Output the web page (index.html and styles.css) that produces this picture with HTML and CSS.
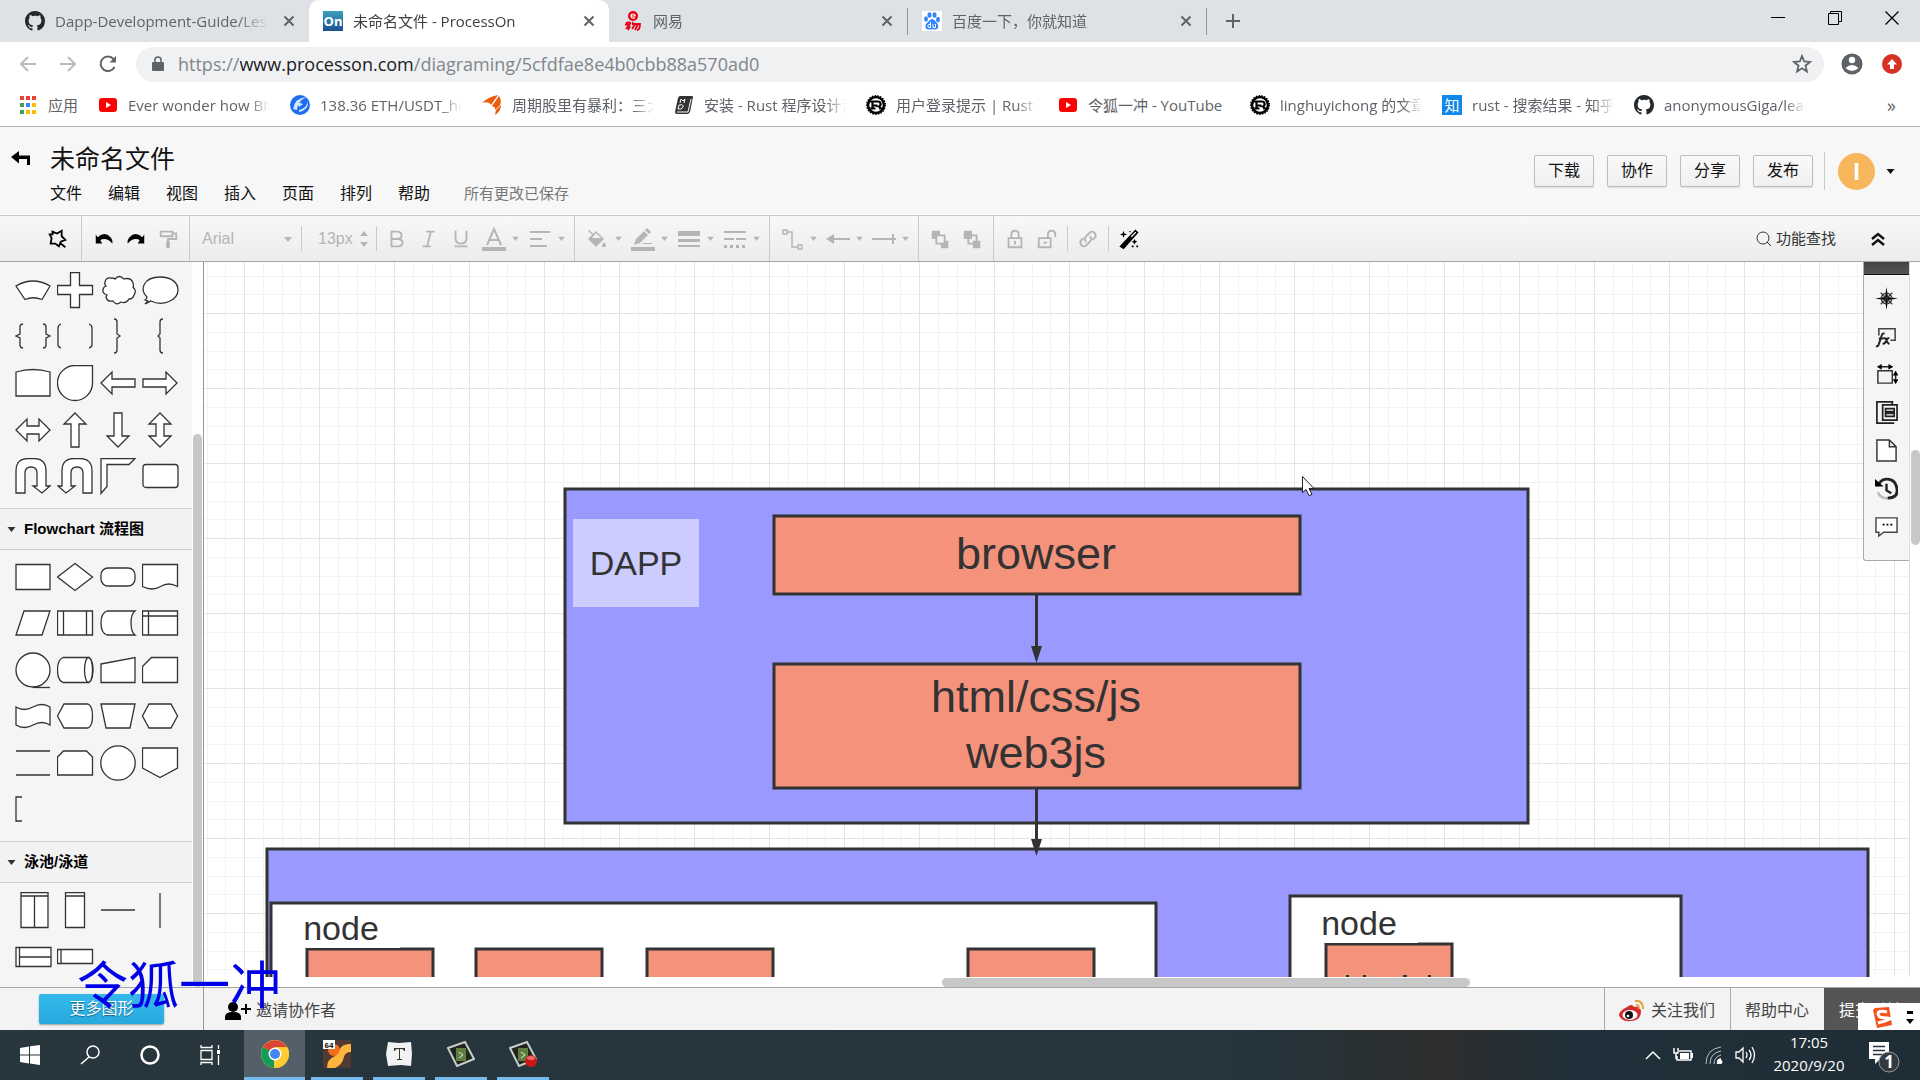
FILE: index.html
```html
<!DOCTYPE html>
<html lang="zh-CN">
<head>
<meta charset="utf-8">
<title>未命名文件 - ProcessOn</title>
<link rel="stylesheet" href="styles.css">
</head>
<body>
<svg class="defs" aria-hidden="true">
  <symbol id="github" viewBox="0 0 16 16"><path fill="#24292e" d="M8 0C3.58 0 0 3.58 0 8c0 3.54 2.29 6.53 5.47 7.59.4.07.55-.17.55-.38 0-.19-.01-.82-.01-1.49-2.01.37-2.53-.49-2.69-.94-.09-.23-.48-.94-.82-1.13-.28-.15-.68-.52-.01-.53.63-.01 1.08.58 1.23.82.72 1.21 1.87.87 2.33.66.07-.52.28-.87.51-1.07-1.78-.2-3.64-.89-3.64-3.95 0-.87.31-1.59.82-2.15-.08-.2-.36-1.02.08-2.12 0 0 .67-.21 2.2.82A7.6 7.6 0 0 1 8 3.87c.68 0 1.36.09 2 .27 1.53-1.04 2.2-.82 2.2-.82.44 1.1.16 1.92.08 2.12.51.56.82 1.27.82 2.15 0 3.07-1.87 3.75-3.65 3.95.29.25.54.73.54 1.48 0 1.07-.01 1.93-.01 2.2 0 .21.15.46.55.38A8.01 8.01 0 0 0 16 8c0-4.42-3.58-8-8-8z"/></symbol>
  <symbol id="youtube" viewBox="0 0 20 20"><rect x="1" y="3" width="18" height="14" rx="3" fill="#f00"/><path d="M8 7l5 3-5 3z" fill="#fff"/></symbol>
  <symbol id="rust" viewBox="0 0 20 20"><circle cx="10" cy="10" r="8" fill="none" stroke="#000" stroke-width="2.5"/><circle cx="10" cy="10" r="9.3" fill="none" stroke="#000" stroke-width="1.4" stroke-dasharray="1.5 1.3"/><path d="M3 6.5h9a2.6 2.6 0 0 1 1 5q1 .3 1.200 2h3M6.500 6.500v7M3 13.500h6.500M6.500 10.500h5" fill="none" stroke="#000" stroke-width="2.200"/></symbol>
  <symbol id="close" viewBox="0 0 20 20"><path d="M5.500 5.500l9 9M14.500 5.500l-9 9" stroke="#5f6368" stroke-width="2"/></symbol>
  <symbol id="caret" viewBox="0 0 8 6"><path d="M0 1h8L4 6z" fill="currentColor"/></symbol>
</svg>

<nav class="tabs" aria-label="标签页">
  <div class="tab"><svg class="fav"><use href="#github"/></svg><span class="fade tab-text">Dapp-Development-Guide/Lesson</span><button aria-label="关闭"><svg class="fav"><use href="#close"/></svg></button></div>
  <div class="tab active"><svg class="fav" viewBox="0 0 20 20"><defs><linearGradient id="on" x2="0" y2="1"><stop stop-color="#3aa0bd"/><stop offset="1" stop-color="#1d4f90"/></linearGradient></defs><rect width="20" height="20" fill="url(#on)"/><text x="10" y="15" class="on-logo">On</text></svg><span class="fade tab-text">未命名文件 - ProcessOn</span><button aria-label="关闭"><svg class="fav"><use href="#close"/></svg></button></div>
  <div class="tab"><svg class="fav" viewBox="0 0 20 20" fill="none" stroke="#e60012"><circle cx="10" cy="5" r="5" fill="#e60012" stroke="none"/><path d="M8 5h4q0-2-2-2T8 5t2 2.200l2-.4" stroke="#fff" stroke-width="1.200"/><path d="M2 13.500h5M3 12c2-1 5-1 4 1l-4 5M10 11c-2 3 4 3 4 1M9 13h8q0 6-3 6M12 13l-3 5M15 13l-3 6M7 15l-2 4" stroke-width="1.800"/></svg><span class="fade tab-text">网易</span><button aria-label="关闭"><svg class="fav"><use href="#close"/></svg></button></div>
  <div class="tab divided"><svg class="fav" viewBox="0 0 20 20"><rect width="20" height="20" fill="#fff"/><g fill="#3385ff"><ellipse cx="4" cy="8" rx="2" ry="2.700"/><ellipse cx="7.500" cy="4" rx="2" ry="2.800"/><ellipse cx="12.500" cy="4" rx="2" ry="2.800"/><ellipse cx="16" cy="8.500" rx="2" ry="2.700"/><path d="M10 8c2 0 3 2 4.500 3.500C18 15 16 19 12.500 18.500q-2.500-.5-5 0C3.500 19 2 15 5 12c2-1.500 3-4 5-4z"/></g><path d="M8.500 11v5.500h-2q-1.500-2 0-3h2M11 13v3.500h2.500V13" fill="none" stroke="#fff"/></svg><span class="fade tab-text">百度一下，你就知道</span><button aria-label="关闭"><svg class="fav"><use href="#close"/></svg></button></div>
  <button class="new-tab" aria-label="新标签页"><svg width="16" height="16"><path d="M8 1v14M1 8h14" stroke="#5f6368" stroke-width="2"/></svg></button>
  <div class="window-buttons">
    <button aria-label="最小化"><svg width="14" height="14"><path d="M0 6.500h14" stroke="#000"/></svg></button>
    <button aria-label="还原"><svg width="14" height="14" fill="none" stroke="#000"><path d="M.5 2.500h10v11H.5zM2.500 2.500v-2h11v10h-3"/></svg></button>
    <button aria-label="关闭窗口"><svg width="14" height="14"><path d="M.5 .5l13 13M13.500 .5l-13 13" stroke="#000" stroke-width="1.300"/></svg></button>
  </div>
</nav>

<div class="address-row">
  <button aria-label="后退"><svg width="18" height="18" fill="none" stroke="#babcbe" stroke-width="2"><path d="M17 9H2M9 2L2 9l7 7"/></svg></button>
  <button aria-label="前进"><svg width="18" height="18" fill="none" stroke="#babcbe" stroke-width="2"><path d="M1 9h15M9 2l7 7-7 7"/></svg></button>
  <button aria-label="重新加载"><svg width="20" height="20" fill="none" stroke="#5f6368" stroke-width="2"><path d="M16.500 13A7.300 7.300 0 1 1 15.500 5l1.500 2"/><path d="M18 2v6.500h-6.500z" fill="#5f6368" stroke="none"/></svg></button>
  <div class="omnibox">
    <svg width="12" height="16"><path d="M1 6h10q1 0 1 1v7q0 1-1 1H1q-1 0-1-1V7q0-1 1-1z" fill="#5f6368"/><path d="M3 6V4q0-3 3-3t3 3v2" fill="none" stroke="#5f6368" stroke-width="1.600"/></svg>
    <a class="url" href="#">https://<b>www.processon.com</b>/diagraming/5cfdfae8e4b0cbb88a570ad0</a>
    <button aria-label="收藏"><svg width="20" height="20"><path d="M10 2l2.200 5.500 5.800.4-4.500 3.800 1.400 5.800-4.900-3.200-4.900 3.200 1.400-5.800L2 7.900l5.800-.4z" fill="none" stroke="#5f6368" stroke-width="1.800"/></svg></button>
  </div>
  <button aria-label="用户"><svg width="22" height="22"><circle cx="11" cy="11" r="10.500" fill="#5f6368"/><circle cx="11" cy="7" r="3.200" fill="#fff"/><path d="M4.500 15q6.500-6 13 0-6.500 6-13 0z" fill="#fff"/></svg></button>
  <button aria-label="更新"><svg width="20" height="20"><circle cx="10" cy="10" r="10" fill="#d93025"/><path d="M10 5l5 5.500h-3V15H8v-4.500H5z" fill="#fff"/></svg></button>
</div>

<nav class="bookmarks" aria-label="书签">
  <a class="apps" href="#"><svg class="fav" viewBox="0 0 20 20"><path fill="#ea4335" d="M2 1h4v4H2zM8 1h4v4H8zM14 1h4v4h-4z"/><path fill="#34a853" d="M2 8h4v4H2zM2 15h4v4H2z"/><path fill="#4285f4" d="M8 8h4v4H8z"/><path fill="#fbbc05" d="M14 8h4v4h-4zM8 15h4v4H8zM14 15h4v4h-4z"/></svg>应用</a>
  <a href="#"><svg class="fav"><use href="#youtube"/></svg><span class="fade">Ever wonder how Bitcoin</span></a>
  <a href="#"><svg class="fav" viewBox="0 0 20 20"><circle cx="10" cy="10" r="10" fill="#1d6df2"/><path d="M3 14Q5 3 16 2q-9 5-9 13zM9 15q8-2 9-9 1 9-9 11zM7 7l6 2-4 3z" fill="#d6e8ff"/></svg><span class="fade">138.36 ETH/USDT_huobi</span></a>
  <a href="#"><svg class="fav" viewBox="0 0 20 20"><path fill="#ea5b0c" d="M0 8Q6 2 16 0L9 10Q7 6 0 8zM10 11L17 1q3 4 1 9l-5 5q1-3-3-4zM14 15l5-5q0 6-6 10z"/></svg><span class="fade">周期股里有暴利：三大</span></a>
  <a href="#"><svg class="fav" viewBox="0 0 20 20"><path fill="#333" d="M6 1h12q1 0 1 1l-3 15-2 2H3q-2 0-2-2L4 3q1-2 2-2z"/><path d="M17 4l-3 13H3M6 8l1-4 2 2 2-2-1 4M5 10l-1 4q4 1 5-2t-4-2" stroke="#fff" fill="none"/></svg><span class="fade">安装 - Rust 程序设计语言</span></a>
  <a href="#"><svg class="fav"><use href="#rust"/></svg><span class="fade">用户登录提示 | Rust 文</span></a>
  <a href="#"><svg class="fav"><use href="#youtube"/></svg><span class="whole">令狐一冲 - YouTube</span></a>
  <a href="#"><svg class="fav"><use href="#rust"/></svg><span class="fade">linghuyichong 的文章</span></a>
  <a href="#"><span class="zhihu">知</span><span class="fade">rust - 搜索结果 - 知乎</span></a>
  <a href="#"><svg class="fav"><use href="#github"/></svg><span class="fade">anonymousGiga/learn</span></a>
  <button class="more-marks" aria-label="更多书签">»</button>
</nav>

<header class="app-header">
  <button class="back" aria-label="返回"><svg width="20" height="16"><path d="M0 7l8-6v4.500h11V15h-3V9H8v4.500z"/></svg></button>
  <div class="doc">
    <h1>未命名文件</h1>
    <nav class="menu"><button>文件</button><button>编辑</button><button>视图</button><button>插入</button><button>页面</button><button>排列</button><button>帮助</button><span class="saved">所有更改已保存</span></nav>
  </div>
  <div class="actions"><button>下载</button><button>协作</button><button>分享</button><button>发布</button></div>
  <button class="account" aria-label="账户"><span class="avatar">I</span><svg width="9" height="6"><use href="#caret"/></svg></button>
</header>

<div class="toolbar">
  <div class="group g-first"><button class="tool dark" aria-label="形状"><svg viewBox="0 0 24 24"><path d="M6 4l5 2 5-3v6l4 4-5 2-2 5-4-3H4l1-6-2-4h3zM15 17l5 4" fill="none" stroke="currentColor" stroke-width="2"/></svg></button></div>
  <div class="group g-history">
    <button class="tool dark" aria-label="撤销"><svg viewBox="0 0 24 24"><path d="M3 7l2 3q8-7 14 0 3 3 2 7-6-7-13-4l2 4H3z"/></svg></button>
    <button class="tool dark" aria-label="重做"><svg viewBox="0 0 24 24"><path d="M21 7l-2 3q-8-7-14 0-3 3-2 7 6-7 13-4l-2 4h7z"/></svg></button>
    <button class="tool" aria-label="格式刷"><svg viewBox="0 0 24 24"><path d="M4 4h13v5H4zM17 6h4v6h-9v3" fill="none" stroke="currentColor" stroke-width="2"/><path d="M10 14h4v8h-4z"/></svg></button>
  </div>
  <div class="group g-text">
    <button class="font-name" aria-label="字体">Arial<svg width="8" height="6"><use href="#caret"/></svg></button><i class="rule"></i>
    <button class="font-size" aria-label="字号">13px<svg width="8" height="16"><path d="M0 5h8L4 0zM0 11h8l-4 5z"/></svg></button><i class="rule"></i>
    <button class="tool" aria-label="粗体"><svg viewBox="0 0 24 24"><path d="M6 4v16h7q5 0 5-4t-5-4H6h6q5 0 5-4t-5-4z" fill="none" stroke="currentColor" stroke-width="2"/></svg></button>
    <button class="tool" aria-label="斜体"><svg viewBox="0 0 24 24"><path d="M9 4h9M5 20h9M14 4l-4 16" fill="none" stroke="currentColor" stroke-width="2"/></svg></button>
    <button class="tool" aria-label="下划线"><svg viewBox="0 0 24 24"><path d="M6 3v8q0 6 6 6t6-6V3M5 20h14" fill="none" stroke="currentColor" stroke-width="2"/></svg></button>
    <button class="tool drop" aria-label="文字颜色"><svg viewBox="0 0 24 24"><path d="M5 18L12 2l7 16M8 13h8" fill="none" stroke="currentColor" stroke-width="2"/><path d="M0 20h24v4H0z"/></svg><svg class="c"><use href="#caret"/></svg></button>
    <button class="tool drop" aria-label="对齐"><svg viewBox="0 0 24 24"><path d="M2 5h20M2 12h12M2 19h17" fill="none" stroke="currentColor" stroke-width="2"/></svg><svg class="c"><use href="#caret"/></svg></button>
  </div>
  <div class="group">
    <button class="tool drop" aria-label="填充"><svg viewBox="0 0 24 24"><path d="M3 12L11 4l8 8-8 8zM4 3l7 6-1 1-7-6zM19 15q4 5 0 5t0-5z"/><path d="M11 6l-4 5h9z" fill="#f2f2f2"/></svg><svg class="c"><use href="#caret"/></svg></button>
    <button class="tool drop" aria-label="线条颜色"><svg viewBox="0 0 24 24"><path d="M3 18l2-6 8-8 4 4-8 8zM14 3l2-2 4 4-2 2zM12 16h9v1h-9zM0 20h24v4H0z"/></svg><svg class="c"><use href="#caret"/></svg></button>
    <button class="tool drop" aria-label="线宽"><svg viewBox="0 0 24 24"><path d="M1 4h22v5H1zM1 12h22v3H1zM1 18h22v2H1z"/></svg><svg class="c"><use href="#caret"/></svg></button>
    <button class="tool drop" aria-label="线型"><svg viewBox="0 0 24 24"><path d="M1 4h22v2H1zM1 11h10v2H1zM13 11h10v2H13zM1 18h3v3H1zM7 18h3v3H7zM13 18h3v3h-3zM19 18h3v3h-3z"/></svg><svg class="c"><use href="#caret"/></svg></button>
  </div>
  <div class="group">
    <button class="tool drop" aria-label="连线类型"><svg viewBox="0 0 24 24"><path d="M3 3h4v4H3zM18 18h4v4h-4zM7 5h5v15h6" fill="none" stroke="currentColor" stroke-width="1.500"/></svg><svg class="c"><use href="#caret"/></svg></button>
    <button class="tool drop" aria-label="起点"><svg viewBox="0 0 24 24"><path d="M0 12l8-5v4h16v2H8v4z"/></svg><svg class="c"><use href="#caret"/></svg></button>
    <button class="tool drop" aria-label="终点"><svg viewBox="0 0 24 24"><path d="M0 11h20V7h2v4h2v2h-2v4h-2v-4H0z"/></svg><svg class="c"><use href="#caret"/></svg></button>
  </div>
  <div class="group">
    <button class="tool" aria-label="置于顶层"><svg viewBox="0 0 24 24"><path d="M3 3h9v9H3zM13 14h8v8h-8z"/><path d="M8 8h9v9H8z" fill="#f2f2f2" stroke="currentColor" stroke-width="2"/></svg></button>
    <button class="tool" aria-label="置于底层"><svg viewBox="0 0 24 24"><path d="M8 8h9v9H8z" fill="none" stroke="currentColor" stroke-width="2"/><path d="M3 3h9v9H3zM13 14h8v8h-8z"/></svg></button>
  </div>
  <div class="group g-last">
    <button class="tool" aria-label="锁定"><svg viewBox="0 0 24 24"><path d="M5 11h14v10H5zM8 11V7q0-4 4-4t4 4v4M12 14v4" fill="none" stroke="currentColor" stroke-width="2"/></svg></button>
    <button class="tool" aria-label="解锁"><svg viewBox="0 0 24 24"><path d="M3 11h13v10H3zM13 11V7q0-4 4-4t4 4v3M8 16h4" fill="none" stroke="currentColor" stroke-width="2"/></svg></button><i class="rule"></i>
    <button class="tool" aria-label="链接"><svg viewBox="0 0 24 24"><path d="M10 15q-3-3 0-6l4-4q3-2 5 0t1 5l-3 3M14 9q3 3 0 6l-4 4q-3 2-5 0t-1-5l3-3" fill="none" stroke="currentColor" stroke-width="2"/></svg></button><i class="rule"></i>
    <button class="tool dark" aria-label="美化"><svg viewBox="0 0 24 24"><path d="M3 20L19 3l2 2L6 22z" stroke="currentColor" stroke-width="2"/><path d="M14 9l5-5 1 1-5 5z" fill="#fff"/><path d="M6 3l1 3 3 1-3 1-1 3-1-3-3-1 3-1zM18 12l1 2 2 1-2 1-1 2-1-2-2-1 2-1zM13 3l1 1-1 1-1-1zM20 19h2v2h-2zM15 19h2v2h-2z"/></svg></button>
  </div>
  <button class="find"><svg width="16" height="16"><circle cx="7" cy="7" r="6" fill="none" stroke="#333"/><path d="M11 11l4 4" stroke="#333"/></svg>功能查找</button>
  <button class="collapse" aria-label="收起"><svg width="14" height="14"><path d="M1 7l6-5 6 5M1 13l6-5 6 5" fill="none" stroke="#111" stroke-width="2.400"/></svg></button>
</div>

<main>
  <aside class="sidebar">
    <div class="panel">
      <div class="shapes rows5">
        <button aria-label="扇形"><svg><path d="M1 14Q18 4 35 14L27 27.500Q18 24 10 27.500z"/></svg></button>
        <button aria-label="十字"><svg><path d="M13.500 .5h9v13h13v9h-13v13h-9v-13H.5v-9h13z"/></svg></button>
        <button aria-label="云"><svg><path d="M5 10q1-5 6-4 3 0 4 1 4-5 9 0 7-2 9 4 1 3 0 4 4 4 1 8-1 4-5 4-3 5-8 3-5 4-8-1-6 1-7-4l1-2q-5-2-4-5 0-3 3-4-2-2-1-4z"/></svg></button>
        <button aria-label="对话"><svg><path d="M3 28q2-1 2-3C-3 17 2 5 18 5c12 0 18 6 18 13 0 10-15 17-27 11-1 0-3 2-6 3l3-3z"/></svg></button>
        <button aria-label="双大括号"><svg class="open"><path d="M8 6Q5 6 5 9v7l-4 2 4 2v7q0 3 3 3M28 6q3 0 3 3v7l4 2-4 2v7q0 3-3 3"/></svg></button>
        <button aria-label="双括号"><svg class="open"><path d="M4 6Q1 7 1 10v17q0 2 3 3M32 6q3 1 3 4v17q0 2-3 3"/></svg></button>
        <button aria-label="右大括号"><svg class="open"><path d="M14 1q3 0 3 3v12l3 2-3 2v12q0 3-3 3"/></svg></button>
        <button aria-label="左大括号"><svg class="open"><path d="M21 1q-3 0-3 3v12l-2 2 2 2v12q0 3 3 3"/></svg></button>
        <button aria-label="拱形"><svg><path d="M1 7Q18 2 35 7v24H1z"/></svg></button>
        <button aria-label="水滴"><svg><path d="M18 .5h17.500V18a17.500 17.500 0 1 1-17.500-17.500z"/></svg></button>
        <button aria-label="左箭头"><svg><path d="M1 18L12 7v7h23v8H12v7z"/></svg></button>
        <button aria-label="右箭头"><svg><path d="M35 18L24 7v7H1v8h23v7z"/></svg></button>
        <button aria-label="双向箭头"><svg><path d="M1 18L12 7v7h12V7l11 11-11 11v-7H12v7z"/></svg></button>
        <button aria-label="上箭头"><svg><path d="M18 1L29 12h-7v23h-8V12H7z"/></svg></button>
        <button aria-label="下箭头"><svg><path d="M18 35L29 24h-7V1h-8v23H7z"/></svg></button>
        <button aria-label="上下箭头"><svg><path d="M18 1L29 12h-7v12h7L18 35 7 24h7V12H7z"/></svg></button>
        <button aria-label="右转弯"><svg><path d="M1 35V13Q1 .5 13 .5h6Q31 .5 31 13v15h4l-8 7-9-7h4V15q0-6-6-6t-6 6v20z"/></svg></button>
        <button aria-label="左转弯"><svg><path d="M35 35V13Q35 .5 23 .5h-6Q5 .5 5 13v15H1l8 7 9-7h-4V15q0-6 6-6t6 6v20z"/></svg></button>
        <button aria-label="角"><svg><path d="M1 .5h34l-6 6H7v22l-6 7z"/></svg></button>
        <button aria-label="圆角矩形"><svg><rect x="1" y="6.500" width="35" height="23" rx="3"/></svg></button>
      </div>
      <h2><svg width="9" height="6"><use href="#caret"/></svg>Flowchart 流程图</h2>
      <div class="shapes rows6">
        <button aria-label="流程"><svg><path d="M1 5.500h34v25H1z"/></svg></button>
        <button aria-label="判定"><svg><path d="M18 4.500L35.500 18 18 31.500.5 18z"/></svg></button>
        <button aria-label="开始结束"><svg><rect x="1" y="9" width="34" height="18" rx="7"/></svg></button>
        <button aria-label="文档"><svg><path d="M.5 5.500h35v22q-9-5-17 0t-18 0z"/></svg></button>
        <button aria-label="数据"><svg><path d="M9 6h26l-8 24H1z"/></svg></button>
        <button aria-label="子流程"><svg><path d="M.5 6h35v24H.5zM6.500 6v24M29.500 6v24"/></svg></button>
        <button aria-label="外部数据"><svg><path d="M35 6H7Q1 8 1 18t6 12h28q-4-3-4-12t4-12z"/></svg></button>
        <button aria-label="内部存储"><svg><path d="M.5 6h35v24H.5zM6.500 6v24M.5 11h35"/></svg></button>
        <button aria-label="顺序数据"><svg><circle cx="18" cy="18" r="17"/><path d="M18 35.500h17"/></svg></button>
        <button aria-label="直接数据"><svg><path d="M6 5.500h26q4 3 4 12.500t-4 12.500H6Q.5 28 .5 18T6 5.500z"/><ellipse cx="31.500" cy="18" rx="4" ry="12.500"/></svg></button>
        <button aria-label="手动输入"><svg><path d="M1 12l34-6.500v25H1z"/></svg></button>
        <button aria-label="卡片"><svg><path d="M9.500 5.500h26v25H.5v-16z"/></svg></button>
        <button aria-label="条带"><svg><path d="M1 9q8 5 17 0t17 0v18q-8-5-17 0T1 27z"/></svg></button>
        <button aria-label="展示"><svg><path d="M7 6h24q4.500 2 4.500 12T31 30H7L.5 18z"/></svg></button>
        <button aria-label="手动操作"><svg><path d="M1 6h34l-5 24H6z"/></svg></button>
        <button aria-label="准备"><svg><path d="M7 6h22l6.500 12L29 30H7L.5 18z"/></svg></button>
        <button aria-label="并行"><svg><path d="M1 6h34M1 30h34"/></svg></button>
        <button aria-label="循环限值"><svg><path d="M6.500 6h23l6 6v18H.5V12z"/></svg></button>
        <button aria-label="页面内引用"><svg><circle cx="18" cy="18" r="17.200"/></svg></button>
        <button aria-label="页面外引用"><svg><path d="M.5 3h35v20L18 32.500.5 23z"/></svg></button>
        <button aria-label="注释"><svg class="open"><path d="M7 6H1v24h6"/></svg></button>
      </div>
      <h2><svg width="9" height="6"><use href="#caret"/></svg>泳池/泳道</h2>
      <div class="shapes rows2">
        <button aria-label="垂直泳池"><svg><path d="M6 .5h27v35H6zM6 4h27M19.500 4v31"/></svg></button>
        <button aria-label="垂直泳道"><svg><path d="M8.500 .5h19v35h-19zM8.500 4h19"/></svg></button>
        <button aria-label="水平分隔"><svg><path d="M1 18h34"/></svg></button>
        <button aria-label="垂直分隔"><svg><path d="M18 1v35"/></svg></button>
        <button aria-label="水平泳池"><svg><path d="M1 8.500h35v19H1zM4.500 8v19M4.500 18h31"/></svg></button>
        <button aria-label="水平泳道"><svg><path d="M.5 10.500h35v14H.5zM4 10v14"/></svg></button>
      </div>
    </div>
    <div class="side-track"><div class="side-thumb"></div></div>
  </aside>

  <section class="workspace">
    <div class="canvas">
      <svg class="diagram" role="img" aria-label="流程图">
        <defs>
          <pattern id="grid" x="40" y="51" width="75" height="75" patternUnits="userSpaceOnUse">
            <path class="minor" d="M19.500 0v75M38.500 0v75M56.500 0v75M0 19.500h75M0 38.500h75M0 56.500h75"/>
            <path class="major" d="M.5 0v75M0 .5h75"/>
          </pattern>
        </defs>
        <rect width="100%" height="100%" fill="url(#grid)"/>
        <g transform="translate(-204 -262)">
          <g class="zone">
            <rect x="565" y="489" width="963" height="334"/>
            <rect x="267" y="849" width="1601" height="300"/>
          </g>
          <g class="host">
            <rect x="271" y="903" width="885" height="200"/>
            <rect x="1290" y="896" width="391" height="200"/>
          </g>
          <g class="part">
            <rect x="774" y="516" width="526" height="78"/>
            <rect x="774" y="664" width="526" height="124"/>
            <rect x="307" y="949" width="126" height="80"/>
            <rect x="476" y="949" width="126" height="80"/>
            <rect x="647" y="949" width="126" height="80"/>
            <rect x="968" y="949" width="126" height="80"/>
            <rect x="1326" y="944" width="126" height="80"/>
          </g>
          <path d="M306 947h94M1325 942h93" stroke="#fff" stroke-width="2"/>
          <path d="M1346 976h3M1363 976h3M1403 976h4M1428 976h3" stroke="#333" stroke-width="2"/>
          <rect x="573" y="519" width="126" height="88" fill="#ccf"/>
          <path d="M1036.500 594v54M1036.500 789v52" stroke="#333" stroke-width="3"/>
          <path d="M1031 646h11l-5.500 17zM1031 839h11l-5.500 17z" fill="#333"/>
          <g class="label small"><text x="636" y="575">DAPP</text><text x="341" y="940">node</text><text x="1359" y="935">node</text></g>
          <g class="label"><text x="1036" y="569">browser</text><text x="1036" y="712">html/css/js</text><text x="1036" y="768">web3js</text></g>
          <path d="M1302.500 476.500v16l3.500-3 3 6 3-1-3-6h5z" fill="#fff" stroke="#222"/>
        </g>
      </svg>
      <nav class="dock" aria-label="面板">
        <div class="dock-grip"></div>
        <button aria-label="导航"><svg viewBox="0 0 24 24"><path d="M12 0l1.500 10.500L24 12l-10.500 1.500L12 24l-1.500-10.500L0 12l10.500-1.500z"/><circle cx="12" cy="12" r="5.500" fill="none" stroke="#333" stroke-width="1.300"/><path d="M6 6l12 12M18 6L6 18" stroke="#333" stroke-width="1.300"/></svg></button>
        <button aria-label="图形"><svg viewBox="0 0 24 24"><path d="M4 11V4h17v12h-5" fill="none" stroke="#444" stroke-width="1.600"/><path d="M1 22q2 1 3-2l3-9q1-3 3-2M4 14h5M9 14q2-1 3 2t3 4M15 14q-2-1-3 2t-4 4" fill="none" stroke="#222" stroke-width="2"/></svg></button>
        <button aria-label="尺寸"><svg viewBox="0 0 24 24"><path d="M3 8h15v13H3z" fill="none" stroke="#333" stroke-width="1.500"/><path d="M3 4h15M21.500 9v12" stroke="#222" stroke-width="1.500"/><path d="M2 4l5-3v6zM19 4l-5-3v6zM21.500 8l3 5h-6zM21.500 22l3-5h-6z"/></svg></button>
        <button aria-label="数据"><svg viewBox="0 0 24 24"><path d="M20 23H2V1h17M18 1v4" fill="none" stroke="#222" stroke-width="1.800"/><path d="M8 4h15v16H8zM11 8h9v3h-9zM11 13h9v3h-9z" fill="#f5f5f5" stroke="#222" stroke-width="1.800"/></svg></button>
        <button aria-label="页面"><svg viewBox="0 0 24 24"><path d="M2 1h13l7 7v15H2zM15 1v7h7" fill="#fff" stroke="#333" stroke-width="1.500"/></svg></button>
        <button aria-label="历史"><svg viewBox="0 0 24 24"><path d="M4 7q4-6 11-4.500T23 13t-10 9" fill="none" stroke="#222" stroke-width="3"/><path d="M13 22q-7 1-10-6" fill="none" stroke="#bbb" stroke-width="2.500"/><path d="M0 2v8h9z"/><path d="M12 7v7l5 3" fill="none" stroke="#222" stroke-width="2.500"/></svg></button>
        <button aria-label="评论"><svg viewBox="0 0 24 24"><path d="M1 3h22v15H9l-5 4v-4H1z" fill="#fff" stroke="#444" stroke-width="1.500"/><path d="M8 9h2v2H8zM12 9h2v2h-2zM16 9h2v2h-2z"/></svg></button>
      </nav>
    </div>
    <div class="v-track"><div class="v-thumb"></div></div>
    <div class="h-track"><div class="h-thumb"></div></div>
  </section>
</main>

<footer class="bottom-bar">
  <div class="more-cell"><button class="more">更多图形</button></div>
  <button class="invite"><svg width="26" height="20"><circle cx="8" cy="6" r="5"/><path d="M0 19v-3q0-5 8-5t8 5v3zM20 3h2v4h4v2h-4v4h-2V9h-4V7h4z"/></svg>邀请协作者</button>
  <a class="foot weibo" href="#"><svg width="26" height="22"><path d="M8 7q5-4 7 0 7-1 7 5 0 8-10 9T0 15Q0 11 8 7z" fill="#d52b2b"/><ellipse cx="11" cy="15" rx="7.500" ry="5" fill="#fff"/><circle cx="10" cy="15" r="4" fill="#111"/><circle cx="9" cy="16" r="1.300" fill="#fff"/><path d="M16 1q8-1 8 8M17 5q3 0 3 4" fill="none" stroke="#e6a23c" stroke-width="2"/></svg>关注我们</a>
  <a class="foot" href="#">帮助中心</a>
  <button class="feedback">提交反馈</button>
  <div class="ime"><svg width="20" height="22"><path d="M3 2l14-1 3 18-15 3L1 4z" fill="#f4511e"/><path d="M15 6Q6 4 6 8t9 4-9 5" fill="none" stroke="#fff" stroke-width="3"/></svg><svg width="8" height="14"><path d="M1 1h6v3H1zM0 9h8l-4 5z"/></svg></div>
</footer>

<footer class="taskbar">
  <button aria-label="开始"><svg width="20" height="20" fill="#fff"><path d="M0 3l9-1.500V9.500H0zM10 1.300L20 0v9.500H10zM0 10.500h9v8L0 17zM10 10.500h10V20l-10-1.500z"/></svg></button>
  <button aria-label="搜索"><svg width="20" height="20" fill="none" stroke="#fff" stroke-width="1.500"><circle cx="13" cy="7" r="6"/><path d="M9 12l-8 7"/></svg></button>
  <button aria-label="Cortana"><svg width="20" height="20" fill="none" stroke="#fff" stroke-width="2.500"><circle cx="10" cy="10" r="8.500"/></svg></button>
  <button aria-label="任务视图"><svg width="20" height="20" fill="none" stroke="#fff" stroke-width="1.300"><path d="M1 5.500h11v9H1zM1 0v2.500h11V0M1 20v-2.500h11V20M18.500 0v4M18.500 10v10"/><path d="M17 5h3v4h-3z" fill="#fff" stroke="none"/></svg></button>
  <button class="run current" aria-label="Chrome"><svg width="28" height="28"><circle cx="14" cy="14" r="14" fill="#fc3"/><path d="M14 14L2 7a14 14 0 0 1 24 0z" fill="#db4437"/><path d="M14 14h-1v14A14 14 0 0 1 2 7z" fill="#0f9d58"/><path d="M14 14h6l-7 14a14 14 0 0 0 13-21H14z" fill="#fc3"/><circle cx="14" cy="14" r="6.500" fill="#fff"/><circle cx="14" cy="14" r="5" fill="#4285f4"/></svg></button>
  <button class="run" aria-label="绘图"><svg width="28" height="28"><path d="M0 0h28v28H0z" fill="#503a32"/><circle cx="11" cy="10" r="6" fill="#f36b1c"/><path d="M4 28q0-9 8-12 4-2 5-7 2-5 11-5v8q-6 0-7 5-2 8-9 11z" fill="#ffb53c"/><path d="M0 0h12v9H0z" fill="#fff"/><text x="6" y="8" class="num">64</text></svg></button>
  <button class="run" aria-label="Typora"><svg width="28" height="28"><path d="M3 2l11 1 12-1 1 12-1 12-10-1-13 1L1 14z" fill="#f2f2f2"/><path d="M9 8h11v3h-1q0-2-3-2h-1v10h2v1h-5v-1h2V9h-1q-3 0-3 2H9z" fill="#333"/></svg></button>
  <button class="run" aria-label="视频工具"><svg width="28" height="28"><path d="M1 8L18 2l9 17-17 7z" fill="#20251d" stroke="#c9cdc9" stroke-width="2"/><path d="M9 8h10v13H9z" fill="#5f7f40"/><path d="M12 12l4 3-4 3" fill="none" stroke="#dfe8d8"/></svg></button>
  <button class="run" aria-label="录屏"><svg width="28" height="28"><path d="M1 8L18 2l9 17-17 7z" fill="#20251d" stroke="#c9cdc9" stroke-width="2"/><path d="M9 8h10v13H9z" fill="#5f7f40"/><path d="M12 12l4 3-4 3" fill="none" stroke="#dfe8d8"/><circle cx="22" cy="21" r="6" fill="#cc1717"/><ellipse cx="22" cy="18" rx="4" ry="2" fill="#ed6b6b"/></svg></button>
  <div class="tray">
    <svg width="16" height="10"><path d="M1 9l7-7 7 7" fill="none" stroke="#fff" stroke-width="1.500"/></svg>
    <svg width="20" height="16" fill="none" stroke="#fff" stroke-width="1.500"><path d="M6 4h12v9H4V9M1 1v5h4V1M3 6v6"/><path d="M7 6h9v6H7zM18 6h2v5h-2z" fill="#fff" stroke="none"/></svg>
    <svg width="18" height="18" fill="none" stroke="#fff"><path d="M1 18Q1 3 16 1M5 18Q5 7 16 5M9 18Q9 11 16 9" stroke="#b5bfc4"/><path d="M13 18q-1-4 3-5" stroke-width="2"/><circle cx="15" cy="16" r="2" fill="#fff"/></svg>
    <svg width="21" height="18" fill="none" stroke="#fff" stroke-width="1.300"><path d="M1 6h3l4-4v14l-4-4H1zM11 6q2 3 0 6M14 4q4 5 0 10M17 1q5 8 0 16"/></svg>
    <div class="clock"><span>17:05</span><span>2020/9/20</span></div>
    <svg class="notes" width="34" height="34"><path d="M3 2h20v17h-9l-5 5v-5H3z" fill="#fff"/><path d="M7 6.500h12M7 10.500h12M7 14.500h12" stroke="#24343c" stroke-width="1.500"/><circle cx="23" cy="22" r="10" fill="#333b40" stroke="#999"/><text x="23" y="28" class="badge">1</text></svg>
  </div>
</footer>
<div class="watermark">令狐一冲</div>
</body>
</html>
```

FILE: styles.css
```css
* { box-sizing: border-box; }
body {
  margin: 0;
  height: 100vh;
  display: flex;
  flex-direction: column;
  overflow: hidden;
  background: #fff;
  color: #111;
  font: 15px/20px "Liberation Sans", "Noto Sans CJK SC", sans-serif;
}
button { border: 0; padding: 0; background: none; font: inherit; color: inherit; white-space: nowrap; }
a { color: inherit; text-decoration: none; }
svg { display: block; flex: none; }
h1, h2 { margin: 0; }
.defs { position: absolute; width: 0; height: 0; }
.fav { width: 20px; height: 20px; }
.fade {
  flex: 1;
  min-width: 0;
  overflow: hidden;
  white-space: nowrap;
  -webkit-mask-image: linear-gradient(90deg, #000 85%, transparent);
  mask-image: linear-gradient(90deg, #000 85%, transparent);
}
.whole { white-space: nowrap; }

/* browser chrome */
.tabs, .address-row, .bookmarks { font-family: "Open Sans", "Noto Sans CJK SC", sans-serif; flex: none; display: flex; align-items: center; }
.tabs { height: 42px; background: #dee1e6; color: #5f6368; }
.tab { flex: 0 1 299px; min-width: 0; height: 42px; padding: 0 10px 0 14px; display: flex; align-items: center; gap: 10px; }
.tab:first-child { flex-basis: 309px; padding-left: 25px; }
.tab:nth-child(3), .tab.divided { border-right: 1px solid; border-image: linear-gradient(transparent 9px, #92959b 9px, #92959b 34px, transparent 34px) 1; }
.tab.active { flex-basis: 300px; background: #fff; color: #3c4043; border-radius: 10px 10px 0 0; }
.tab-text { line-height: 24px; }
.on-logo { fill: #fff; font: bold 13px "Open Sans", sans-serif; text-anchor: middle; }
.new-tab { margin-left: 18px; }
.window-buttons { margin-left: auto; align-self: flex-start; height: 36px; display: flex; }
.window-buttons button { width: 57px; display: grid; place-items: center; }
.address-row { height: 44px; padding: 0 8px; }
.address-row > button { width: 40px; display: grid; place-items: center; }
.omnibox { flex: 1; margin: 0 8px; height: 35px; border-radius: 18px; background: #f0f1f3; display: flex; align-items: center; gap: 14px; padding: 0 12px 0 16px; }
.url { flex: 1; font-size: 18px; line-height: 26px; color: #80868b; }
.url b { font-weight: 400; color: #202124; }
.bookmarks { height: 41px; padding: 0 0 2px 18px; border-bottom: 1px solid #b4b4b4; color: #5f6368; }
.bookmarks a { flex: 0 1 192px; min-width: 0; padding-right: 20px; display: flex; align-items: center; gap: 10px; }
.bookmarks .apps { flex: 0 0 80px; padding: 0; white-space: nowrap; }
.zhihu { width: 20px; background: #0f88eb; color: #fff; text-align: center; }
.more-marks { margin: 0 24px 0 auto; font-size: 18px; }

/* document header */
.app-header { flex: none; height: 89px; background: #f7f7f7; border-bottom: 1px solid #c8c8c8; display: flex; align-items: center; padding-right: 25px; }
.back { width: 50px; height: 89px; padding: 0 0 26px 11px; display: flex; align-items: center; }
.doc { flex: 1; padding-top: 2px; }
h1 { font: 400 25px/36px "Noto Sans CJK SC", sans-serif; }
.menu { display: flex; gap: 26px; padding-top: 7px; font-size: 16px; line-height: 24px; }
.saved { margin-left: 8px; font-size: 15px; color: #777; }
.actions { display: flex; gap: 13px; padding-right: 11px; }
.actions button { width: 60px; height: 32px; border: 1px solid #bdbdbd; border-radius: 2px; background: linear-gradient(#f9f9f9, #f0f0f0); box-shadow: 0 1px 1px #ddd; font-size: 16px; }
.account { height: 38px; padding-left: 13px; border-left: 1px solid #c8c8c8; display: flex; align-items: center; gap: 11px; }
.avatar { width: 37px; height: 37px; border-radius: 50%; background: #f8b65c; color: #fff; font-size: 24px; line-height: 37px; font-weight: 700; }

/* formatting toolbar */
.toolbar { flex: none; height: 46px; background: linear-gradient(#f8f8f8, #ececec); border-bottom: 1px solid #a5a5a5; display: flex; align-items: stretch; color: #b5b5b5; }
.group { display: flex; align-items: center; padding: 0 5px; border-right: 1px solid #cacaca; }
.g-first { width: 82px; justify-content: flex-end; padding-right: 7px; }
.g-history { width: 108px; padding: 0 4px 0 6px; }
.g-text { width: 385px; padding-left: 12px; }
.g-last { border: 0; }
.tool { width: 32px; height: 32px; display: flex; align-items: center; justify-content: center; }
.tool svg { width: 22px; height: 22px; fill: currentColor; }
.tool.dark { color: #000; }
.tool.drop { width: 46px; justify-content: flex-start; gap: 6px; padding-left: 5px; }
.tool.drop svg:first-child { width: 24px; height: 24px; }
.tool.drop .c { width: 7px; height: 5px; }
.rule { width: 1px; height: 25px; background: #cacaca; margin: 0 4px; }
.font-name { width: 95px; padding-right: 5px; display: flex; align-items: center; justify-content: space-between; font-size: 16px; }
.font-size { width: 66px; padding: 0 4px 0 12px; display: flex; align-items: center; justify-content: space-between; font-size: 16px; }
.font-size svg { fill: currentColor; }
.find { margin-left: auto; display: flex; align-items: center; gap: 4px; color: #333; }
.collapse { width: 84px; display: grid; place-items: center; }

/* shape library */
main { flex: 1; min-height: 0; display: flex; }
.sidebar { flex: none; width: 204px; display: flex; overflow: hidden; border-right: 1px solid #999; }
.panel { flex: 1; min-width: 0; background: #f5f5f5; }
.side-track { width: 11px; padding: 172px 0 0 1px; background: #fdfdfd; display: flex; }
.side-thumb { width: 9px; border-radius: 5px; background: #c8c8c8; }
.shapes { display: grid; grid-template-columns: repeat(4, 1fr); padding: 5px 10px 8px 12px; place-items: center; }
.rows5 { height: 246px; grid-template-rows: repeat(5, 1fr); }
.rows6 { height: 291px; padding-top: 4px; grid-template-rows: repeat(6, 1fr); }
.rows2 { height: 106px; padding-top: 4px; grid-template-rows: repeat(2, 1fr); }
.shapes svg { width: 37px; height: 37px; fill: #fff; stroke: #333; stroke-width: 1.3; }
.shapes svg.open { fill: none; }
h2 { height: 42px; padding-left: 7px; border: 1px solid #cfcfcf; border-width: 1px 0; background: #f2f2f2; display: flex; align-items: center; gap: 8px; font-size: 15px; line-height: 20px; color: #000; }
h2 svg { color: #333; }

/* drawing area */
.workspace { flex: 1; min-width: 0; display: grid; grid-template: minmax(0, 1fr) 10px / minmax(0, 1fr) 11px; }
.canvas { position: relative; overflow: hidden; }
.diagram { width: 100%; height: 100%; }
.minor { stroke: #f3f3f3; }
.major { stroke: #e4e4e4; }
.zone rect { fill: #99f; stroke: #333; stroke-width: 3; }
.host rect { fill: #fff; stroke: #333; stroke-width: 3; }
.part rect { fill: #f5927c; stroke: #333; stroke-width: 3; }
.label { font-size: 45px; fill: #333; text-anchor: middle; }
.label.small { font-size: 34px; }
.dock { position: absolute; top: 0; right: 0; width: 46px; height: 299px; border: 1px solid #aaa; border-width: 0 0 1px 1px; border-radius: 0 0 0 3px; background: #f5f5f5; display: flex; flex-direction: column; align-items: center; }
.dock-grip { width: 100%; height: 13px; margin-bottom: 4px; background: linear-gradient(#444, #555); border-bottom: 1px solid #111; }
.dock button { height: 38px; display: grid; place-items: center; }
.dock svg { width: 23px; height: 23px; }
.v-track { border-left: 1px solid #ddd; padding-top: 188px; }
.v-thumb { height: 95px; width: 9px; margin-left: 1px; border-radius: 5px; background: #c8c8c8; }
.h-track { grid-column: 1 / 3; padding-left: 43%; }
.h-thumb { width: 54%; height: 9px; margin-top: 1px; border-radius: 5px; background: #c8c8c8; }

/* status bar */
.bottom-bar { position: relative; flex: none; height: 43px; background: #f3f3f3; border-top: 1px solid #a5a5a5; display: flex; align-items: center; font-size: 16px; color: #444; }
.more-cell { width: 204px; height: 42px; padding: 6px 0 0 39px; border-right: 1px solid #999; }
.more { width: 125px; height: 30px; border-radius: 2px; background: linear-gradient(#35b9ea, #27a9de); box-shadow: 0 1px 2px #999; color: #fff; text-shadow: 0 1px 1px #17658a; }
.invite { margin: 0 auto 0 21px; padding-top: 3px; display: flex; align-items: center; gap: 5px; }
.foot { height: 42px; padding: 3px 15px 0 14px; border-left: 1px solid #aaa; display: flex; align-items: center; gap: 6px; }
.feedback { width: 96px; height: 42px; padding: 3px 0 0 15px; background: #555; color: #fff; text-align: left; }
.ime { position: absolute; right: 0; bottom: 0; width: 62px; height: 27px; padding: 0 6px 0 14px; background: #fff; display: flex; align-items: center; justify-content: space-between; }

/* system taskbar */
.taskbar { flex: none; height: 50px; background: linear-gradient(90deg, #28363d 0%, #24353d 65%, #2d2d2d 75%, #20303a 82%, #1e2d35); display: flex; align-items: stretch; font-family: "Open Sans", sans-serif; color: #fff; }
.taskbar button { width: 60px; display: grid; place-items: center; }
.taskbar .run { width: 52px; margin: 0 4px 0 6px; border-bottom: 3px solid #76b9ed; }
.taskbar .current { width: 61px; margin: 0 0 0 4px; background: #53606a; }
.num { font: bold 8px "Liberation Sans", sans-serif; text-anchor: middle; }
.tray { margin-left: auto; display: flex; align-items: center; gap: 12px; padding-right: 24px; }
.clock { width: 82px; margin-right: 4px; padding-bottom: 2px; display: flex; flex-direction: column; align-items: center; line-height: 23px; }
.notes { margin: 4px -4px 0 0; }
.badge { fill: #fff; font: bold 17px "Open Sans", sans-serif; text-anchor: middle; }
.watermark { position: absolute; left: 77px; bottom: 68px; font: 51px/60px "Noto Sans CJK SC", sans-serif; color: #0000e8; pointer-events: none; }
```
